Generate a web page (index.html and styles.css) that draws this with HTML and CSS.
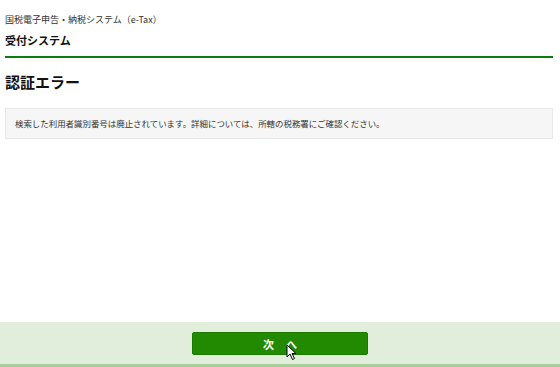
FILE: index.html
```html
<!DOCTYPE html>
<html lang="ja">
<head>
    <meta charset="UTF-8">
    <meta name="viewport" content="width=device-width, initial-scale=1.0">
    <title>認証エラー</title>
    <link rel="stylesheet" href="styles.css">
</head>
<body>
    <div class="page">
        <div class="header">
            <div class="system-name">国税電子申告・納税システム（e-Tax）</div>
            <div class="sub-name">受付システム</div>
        </div>

        <div class="content">
            <h1 class="title">認証エラー</h1>
            <div class="message">検索した利用者識別番号は廃止されています。詳細については、所轄の税務署にご確認ください。</div>
        </div>

        <div class="footer">
            <button class="next-button">次へ</button>
            <svg class="cursor" width="11" height="17" viewBox="0 0 11 17">
                <path d="M1 1 L1 13 L4 10 L6.5 15.5 L8.5 14.5 L6 9.5 L10 9.5 Z" fill="#fff" stroke="#000" stroke-width="1" stroke-linejoin="round"/>
            </svg>
        </div>
    </div>
</body>
</html>
```

FILE: styles.css
```css
body {
    margin: 0;
    font-family: "Noto Sans CJK JP", "Noto Sans", sans-serif;
    color: #222;
    background-color: #fff;
}
.page {
    display: flex;
    flex-direction: column;
    height: 367px;
}
.header {
    margin: 0 7px 0 5px;
    padding-top: 13px;
    border-bottom: 2px solid #0f7a0f;
}
.system-name {
    font-size: 9px;
    line-height: 13px;
    color: #333;
}
.sub-name {
    font-size: 11px;
    font-weight: bold;
    line-height: 14px;
    margin-top: 7px;
    padding-bottom: 9px;
    color: #111;
}
.content {
    flex: 1;
    margin: 0 7px 0 5px;
}
.title {
    font-size: 15px;
    font-weight: bold;
    line-height: 20px;
    margin: 14px 0 16px 0;
    color: #111;
}
.message {
    background-color: #f6f6f6;
    border: 1px solid #e8e8e8;
    padding: 8px 9px;
    font-size: 8.45px;
    line-height: 13px;
    color: #333;
}
.footer {
    position: relative;
    display: flex;
    justify-content: center;
    align-items: flex-start;
    height: 45px;
    padding-top: 10px;
    box-sizing: border-box;
    background-color: #e0eedb;
    border-bottom: 3px solid #a9cc9c;
}
.next-button {
    width: 176px;
    height: 23px;
    background-color: #228a00;
    border: 1px solid #1c7a00;
    border-radius: 2px;
    color: #fff;
    font-family: "Noto Sans CJK JP", sans-serif;
    font-size: 11px;
    font-weight: bold;
    letter-spacing: 12px;
    padding: 0 0 0 12px;
}
.cursor {
    position: absolute;
    left: 286px;
    top: 22px;
}
```
